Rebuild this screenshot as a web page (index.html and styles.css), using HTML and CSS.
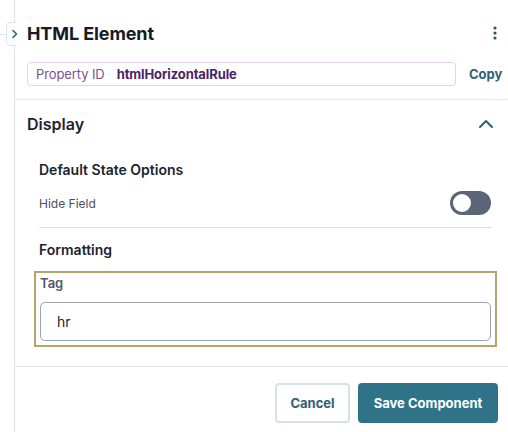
FILE: index.html
```html
<!DOCTYPE html>
<html>
<head>
<meta charset="utf-8">
<link rel="stylesheet" href="styles.css">
</head>
<body>
<div class="stage">
  <div class="handle">
    <span class="handle-line"></span>
    <div class="handle-tab">
      <svg width="8" height="10" viewBox="0 0 8 10"><path d="M2 1.5 L5.5 5 L2 8.5" fill="none" stroke="#2d6479" stroke-width="1.6" stroke-linecap="round" stroke-linejoin="round"/></svg>
    </div>
  </div>
  <div class="panel">
    <div class="head">
      <div class="title-row">
        <h1 class="title">HTML Element</h1>
        <svg class="kebab" width="4" height="14" viewBox="0 0 4 14"><circle cx="2" cy="2" r="1.6" fill="#2d5468"/><circle cx="2" cy="7" r="1.6" fill="#2d5468"/><circle cx="2" cy="12" r="1.6" fill="#2d5468"/></svg>
      </div>
      <div class="prop-row">
        <div class="prop-box"><span class="prop-label">Property ID</span><span class="prop-value">htmlHorizontalRule</span></div>
        <span class="copy">Copy</span>
      </div>
    </div>
    <div class="section">
      <div class="section-head">
        <span class="section-title">Display</span>
        <svg width="16" height="10" viewBox="0 0 16 10"><path d="M2 8 L8 2 L14 8" fill="none" stroke="#2d6479" stroke-width="2" stroke-linecap="round" stroke-linejoin="round"/></svg>
      </div>
      <div class="section-body">
        <div class="group-title first">Default State Options</div>
        <div class="field-row">
          <span class="field-label">Hide Field</span>
          <span class="toggle"><span class="knob"></span></span>
        </div>
        <div class="divider"></div>
        <div class="group-title">Formatting</div>
      </div>
      <div class="selected">
        <div class="tag-label">Tag</div>
        <div class="input">hr</div>
      </div>
    </div>
    <div class="footer">
      <button class="btn cancel">Cancel</button>
      <button class="btn save">Save Component</button>
    </div>
  </div>
</div>
</body>
</html>
```
FILE: styles.css
```css
* { box-sizing: border-box; }
html, body { margin: 0; padding: 0; background: #fff; }
body { font-family: Inter, "Noto Sans", sans-serif; color: #1d2330; width: 508px; height: 432px; overflow: hidden; }
.stage { position: relative; display: flex; height: 432px; }
.handle { position: absolute; left: 0; top: 0; width: 15px; height: 60px; }
.handle-line { position: absolute; left: 0; top: 34px; width: 7px; height: 1px; background: #dfe2e6; }
.handle-tab { position: absolute; left: 6px; top: 22px; width: 10px; height: 24px; border: 1px solid #dfe2e6; border-right: none; border-radius: 5px 0 0 5px; background: #fff; display: flex; align-items: center; justify-content: flex-end; }
.handle-tab svg { margin-right: -3px; }
.panel { margin-left: 14px; width: 494px; border-left: 1px solid #e1e4e8; height: 432px; display: flex; flex-direction: column; }
.head { padding: 20px 0 13px 12px; border-bottom: 1px solid #e3e5e9; }
.title-row { display: flex; align-items: center; justify-content: space-between; height: 26px; padding-right: 11px; }
.title { margin: 0; font-size: 18px; font-weight: 700; color: #161b26; letter-spacing: -0.1px; }
.prop-row { display: flex; align-items: center; margin-top: 16px; }
.prop-box { width: 429px; height: 24px; border: 1px solid #e6d2f2; border-radius: 4px; display: flex; align-items: center; padding-left: 8px; font-size: 13px; letter-spacing: -0.1px; }
.prop-label { color: #7a4f96; }
.prop-value { color: #4b2368; font-weight: 700; margin-left: 12px; }
.copy { margin-left: 13px; font-size: 13px; font-weight: 700; color: #2f6076; }
.section { flex: 0 0 auto; border-bottom: 1px solid #e3e5e9; padding-bottom: 19px; }
.section-head { display: flex; align-items: center; justify-content: space-between; height: 48px; padding: 0 14px 0 12px; }
.section-title { font-size: 16px; font-weight: 600; color: #1d2330; }
.section-body { padding: 0 17px 0 24px; }
.group-title { font-size: 14px; font-weight: 600; line-height: 22px; color: #1d2330; margin-top: 11px; }
.group-title.first { margin-top: 11px; }
.field-row { display: flex; align-items: center; justify-content: space-between; margin-top: 10px; height: 24px; }
.field-label { font-size: 12px; color: #4a505c; }
.toggle { width: 41px; height: 24px; border-radius: 12px; background: #5a6678; position: relative; display: block; }
.knob { position: absolute; left: 3px; top: 3px; width: 18px; height: 18px; border-radius: 50%; background: #fff; }
.divider { height: 1px; background: #dcdfe4; margin-top: 12px; }
.selected { margin: 10px 11px 0 19px; border: 2px solid #b8a46a; padding: 0 4px 4px 4px; }
.tag-label { font-size: 13px; font-weight: 600; color: #4f5866; line-height: 20px; }
.input { margin-top: 9px; height: 39px; border: 1px solid #9ea4b0; border-radius: 5px; padding-left: 16px; display: flex; align-items: center; font-size: 14px; color: #1d2330; }
.footer { display: flex; justify-content: flex-end; gap: 8px; padding: 16px 10px 0 0; }
.btn { font-family: Inter, "Noto Sans", sans-serif; font-size: 13px; font-weight: 700; height: 40px; border-radius: 4px; cursor: pointer; }
.cancel { width: 75px; background: #fff; border: 2px solid #d4e3e8; color: #2f6076; }
.save { width: 140px; background: #2f7388; border: none; color: #fff; }
```
